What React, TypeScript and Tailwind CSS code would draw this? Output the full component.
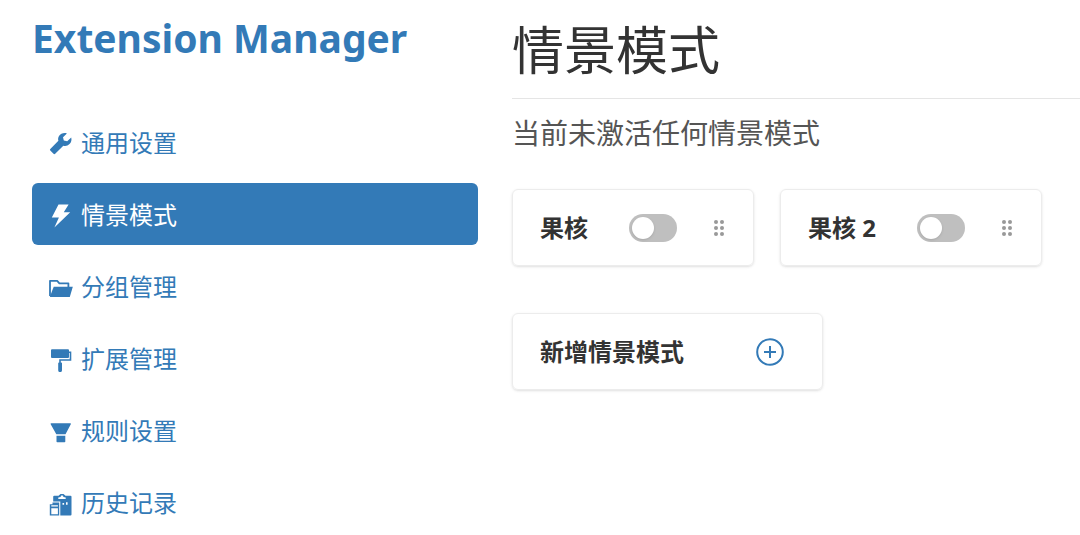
import React, { useState } from 'react';

interface NavItem {
  id: string;
  label: string;
  icon: React.ReactNode;
}

interface Scene {
  id: string;
  name: string;
  active: boolean;
}

const NAV_ITEMS: NavItem[] = [
  {
    id: 'setting',
    label: '通用设置',
    icon: (
      <path d="M22.2 5.4 18.2 9.2 14.8 8.6 14 5.2 17.9 1.4C14.8.6 11.6 1.5 10 4 9 5.6 8.9 7.3 9.4 8.8L1.3 16.9a1.2 1.2 0 0 0 0 1.7l3.2 3.2a1.2 1.2 0 0 0 1.7 0L14.300 13.700c2.200.7 4.500.1 6.200-1.600 1.800-1.800 2.400-4.300 1.700-6.700Z" />
    ),
  },
  {
    id: 'scene',
    label: '情景模式',
    icon: <path d="M9.5.6H19.6L14.8 8.2H21.2L5.4 23.6 9.9 13.6H2.8Z" />,
  },
  {
    id: 'group',
    label: '分组管理',
    icon: (
      <>
        <path
          d="M1 20V4.8h7.200l2.200 2.500h9V11"
          fill="none"
          stroke="currentColor"
          strokeWidth="1.8"
          strokeLinejoin="round"
        />
        <path d="M4.7 10.8H23.8L20.8 21H.8Z" />
      </>
    ),
  },
  {
    id: 'management',
    label: '扩展管理',
    icon: (
      <>
        <path d="M3 1.300h16a1 1 0 0 1 1 1V9a1 1 0 0 1-1 1H3a1 1 0 0 1-1-1V2.300a1 1 0 0 1 1-1Z" />
        <path d="M19.500 4.200H21.500V12H11V15" fill="none" stroke="currentColor" strokeWidth="1.6" />
        <path d="M10 14.500h2.200a.8.8 0 0 1 .8.8V22.200a1.900 1.900 0 0 1-3.800 0v-6.900a.8.8 0 0 1 .8-.8Z" />
      </>
    ),
  },
  {
    id: 'rule',
    label: '规则设置',
    icon: (
      <>
        <path d="M2.3 3.2H21.2a.7.7 0 0 1 .6 1.1L16.500 14.200H7.300L1.700 4.300a.7.7 0 0 1 .6-1.100Z" />
        <path d="M7.500 15.800h8.800v5.700a.7.7 0 0 1-.7.7H8.200a.7.7 0 0 1-.7-.7Z" />
      </>
    ),
  },
  {
    id: 'history',
    label: '历史记录',
    icon: (
      <>
        <path
          fillRule="evenodd"
          d="M5.200 3.800H9.500L11.500 2h3l2 1.800h5a1 1 0 0 1 1 1V22.500a1 1 0 0 1-1 1H11.300V9.500H4.200V4.800a1 1 0 0 1 1-1ZM9.300 5.600V6.900h7.400V5.600l-2.200-.5-.7-1.500h-1.600l-.7 1.500ZM13.500 11v1.700h1.600V11ZM17 10.200v2.500h1.600v-2.500Z"
        />
        <path
          fillRule="evenodd"
          d="M3.500 10.500H10.200V23.500H.8V12.200H3.500ZM2.300 13.300V14.500H8.900V13.300ZM2.300 16.200V22.200H8.900V16.200Z"
        />
      </>
    ),
  },
];

const App: React.FC = () => {
  const [current, setCurrent] = useState('scene');
  const [scenes, setScenes] = useState<Scene[]>([
    { id: '1', name: '果核', active: false },
    { id: '2', name: '果核 2', active: false },
  ]);

  const toggleScene = (id: string) => {
    setScenes((prev) => prev.map((s) => ({ ...s, active: s.id === id ? !s.active : false })));
  };

  const addScene = () => {
    setScenes((prev) => {
      const next = String(prev.length + 1);
      return [...prev, { id: next, name: `果核 ${next}`, active: false }];
    });
  };

  const activeScene = scenes.find((s) => s.active);

  return (
    <div className="grid grid-cols-[446fr_568fr] gap-x-[34px] bg-white pl-8 font-['Noto_Sans','Noto_Sans_CJK_SC',sans-serif] text-[#333333]">
      <aside>
        <div className="pt-3 text-[39px] leading-[52px] font-bold text-[#337ab7]">Extension Manager</div>

        <nav className="mt-[47px] flex flex-col gap-2.5">
          {NAV_ITEMS.map((item) => (
            <a
              key={item.id}
              href={`#${item.id}`}
              onClick={() => setCurrent(item.id)}
              className={`flex items-center gap-2 rounded-md px-[17px] pt-5 pb-4 text-2xl leading-6 ${
                current === item.id ? 'bg-[#337ab7] text-white' : 'text-[#337ab7]'
              }`}
            >
              <svg viewBox="0 0 24 24" fill="currentColor" className="size-6 shrink-0" aria-hidden="true">
                {item.icon}
              </svg>
              <span className="pb-0.5">{item.label}</span>
            </a>
          ))}
        </nav>
      </aside>

      <main>
        <h1 className="border-b border-[#e5e5e5] pt-5 pb-[18px] text-[52px] leading-[60px]">情景模式</h1>
        <p className="pt-4 text-[28px] leading-9 text-[#555555]">
          {activeScene ? `当前激活的情景模式为 ${activeScene.name}` : '当前未激活任何情景模式'}
        </p>

        <div className="mt-[38px] flex flex-wrap gap-x-[26px] gap-y-[47px]">
          {scenes.map((scene) => (
            <div
              key={scene.id}
              className="flex h-[77px] items-center rounded-md border border-[#ececec] pr-7 pl-[27px] shadow-sm"
            >
              <label htmlFor={`scene-${scene.id}`} className="text-2xl font-bold">
                {scene.name}
              </label>
              <input
                id={`scene-${scene.id}`}
                type="checkbox"
                role="switch"
                checked={scene.active}
                onChange={() => toggleScene(scene.id)}
                className="ml-[41px] h-7 w-12 cursor-pointer appearance-none rounded-full bg-[#bfbfbf] p-[3px] transition-colors before:block before:size-[22px] before:rounded-full before:bg-white before:shadow-sm before:transition-transform checked:bg-[#337ab7] checked:before:translate-x-5"
              />
              <button type="button" aria-label="drag" className="ml-9 cursor-move text-[#999999]">
                <svg viewBox="0 0 12 18" fill="currentColor" className="h-[18px] w-3">
                  <circle cx="3" cy="3" r="2" />
                  <circle cx="9" cy="3" r="2" />
                  <circle cx="3" cy="9" r="2" />
                  <circle cx="9" cy="9" r="2" />
                  <circle cx="3" cy="15" r="2" />
                  <circle cx="9" cy="15" r="2" />
                </svg>
              </button>
            </div>
          ))}

          <button
            type="button"
            onClick={addScene}
            className="flex h-[77px] w-[311px] cursor-pointer items-center justify-between rounded-md border border-[#ececec] pr-[38px] pl-[27px] text-2xl font-bold shadow-sm"
          >
            <span>新增情景模式</span>
            <svg
              viewBox="0 0 28 28"
              fill="none"
              stroke="currentColor"
              strokeWidth="2"
              className="size-7 text-[#337ab7]"
              aria-hidden="true"
            >
              <circle cx="14" cy="14" r="12.8" />
              <path d="M8 14h12M14 8v12" />
            </svg>
          </button>
        </div>
      </main>
    </div>
  );
};

export default App;
